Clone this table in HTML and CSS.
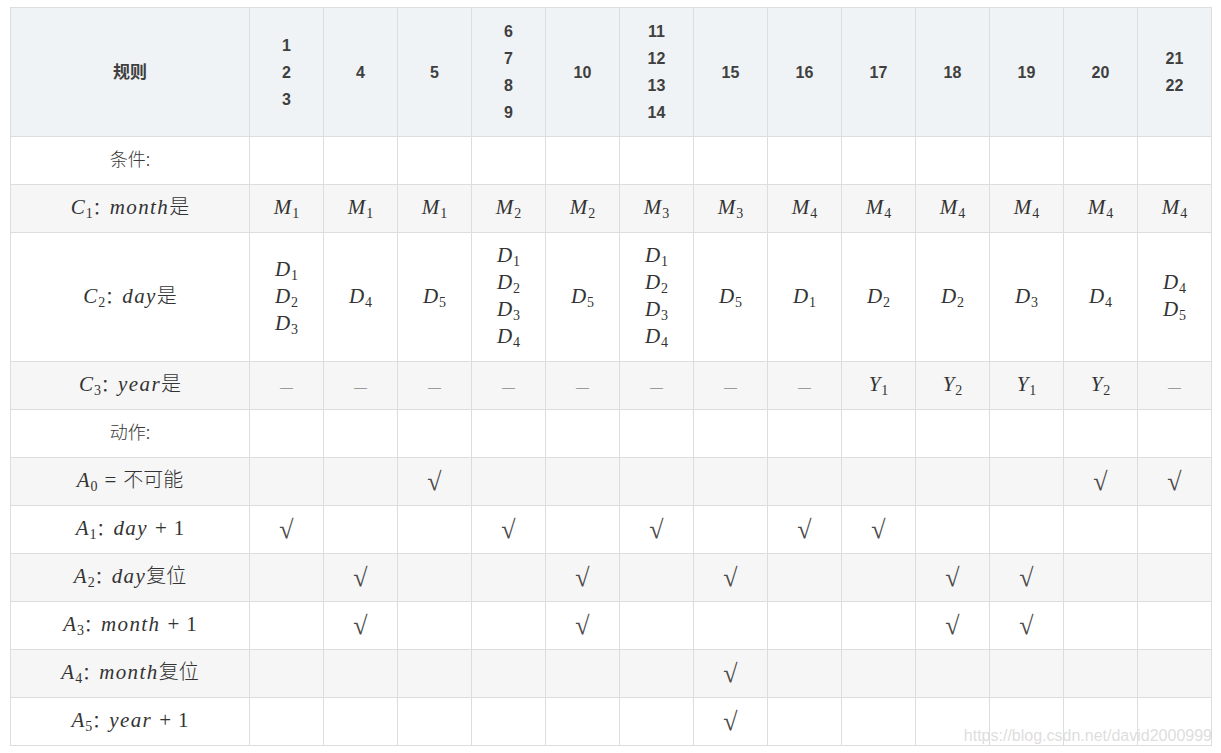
FILE: index.html
```html
<!DOCTYPE html>
<html lang="zh">
<head>
<meta charset="utf-8">
<title>判定表</title>
<link rel="stylesheet" href="styles.css">
</head>
<body>
<div class="page">
<table class="dt">
  <colgroup>
    <col class="c-label">
    <col span="13" class="c-rule">
  </colgroup>
  <thead>
    <tr>
      <th><span class="hz">规则</span></th>
      <th>1<br>2<br>3</th>
      <th>4</th>
      <th>5</th>
      <th>6<br>7<br>8<br>9</th>
      <th>10</th>
      <th>11<br>12<br>13<br>14</th>
      <th>15</th>
      <th>16</th>
      <th>17</th>
      <th>18</th>
      <th>19</th>
      <th>20</th>
      <th>21<br>22</th>
    </tr>
  </thead>
  <tbody>
    <tr>
      <td><span class="lbl">条件:</span></td>
      <td></td><td></td><td></td><td></td><td></td><td></td><td></td><td></td><td></td><td></td><td></td><td></td><td></td>
    </tr>
    <tr>
      <td><span class="m">C<sub>1</sub></span><span class="colon">：</span><span class="m w">month</span><span class="cjk">是</span></td>
      <td><span class="m">M<sub>1</sub></span></td>
      <td><span class="m">M<sub>1</sub></span></td>
      <td><span class="m">M<sub>1</sub></span></td>
      <td><span class="m">M<sub>2</sub></span></td>
      <td><span class="m">M<sub>2</sub></span></td>
      <td><span class="m">M<sub>3</sub></span></td>
      <td><span class="m">M<sub>3</sub></span></td>
      <td><span class="m">M<sub>4</sub></span></td>
      <td><span class="m">M<sub>4</sub></span></td>
      <td><span class="m">M<sub>4</sub></span></td>
      <td><span class="m">M<sub>4</sub></span></td>
      <td><span class="m">M<sub>4</sub></span></td>
      <td><span class="m">M<sub>4</sub></span></td>
    </tr>
    <tr>
      <td><span class="m">C<sub>2</sub></span><span class="colon">：</span><span class="m w">day</span><span class="cjk">是</span></td>
      <td><span class="m">D<sub>1</sub></span><br><span class="m">D<sub>2</sub></span><br><span class="m">D<sub>3</sub></span></td>
      <td><span class="m">D<sub>4</sub></span></td>
      <td><span class="m">D<sub>5</sub></span></td>
      <td><span class="m">D<sub>1</sub></span><br><span class="m">D<sub>2</sub></span><br><span class="m">D<sub>3</sub></span><br><span class="m">D<sub>4</sub></span></td>
      <td><span class="m">D<sub>5</sub></span></td>
      <td><span class="m">D<sub>1</sub></span><br><span class="m">D<sub>2</sub></span><br><span class="m">D<sub>3</sub></span><br><span class="m">D<sub>4</sub></span></td>
      <td><span class="m">D<sub>5</sub></span></td>
      <td><span class="m">D<sub>1</sub></span></td>
      <td><span class="m">D<sub>2</sub></span></td>
      <td><span class="m">D<sub>2</sub></span></td>
      <td><span class="m">D<sub>3</sub></span></td>
      <td><span class="m">D<sub>4</sub></span></td>
      <td><span class="m">D<sub>4</sub></span><br><span class="m">D<sub>5</sub></span></td>
    </tr>
    <tr>
      <td><span class="m">C<sub>3</sub></span><span class="colon">：</span><span class="m w">year</span><span class="cjk">是</span></td>
      <td><span class="dash">—</span></td>
      <td><span class="dash">—</span></td>
      <td><span class="dash">—</span></td>
      <td><span class="dash">—</span></td>
      <td><span class="dash">—</span></td>
      <td><span class="dash">—</span></td>
      <td><span class="dash">—</span></td>
      <td><span class="dash">—</span></td>
      <td><span class="m">Y<sub>1</sub></span></td>
      <td><span class="m">Y<sub>2</sub></span></td>
      <td><span class="m">Y<sub>1</sub></span></td>
      <td><span class="m">Y<sub>2</sub></span></td>
      <td><span class="dash">—</span></td>
    </tr>
    <tr>
      <td><span class="lbl">动作:</span></td>
      <td></td><td></td><td></td><td></td><td></td><td></td><td></td><td></td><td></td><td></td><td></td><td></td><td></td>
    </tr>
    <tr>
      <td><span class="m">A<sub>0</sub></span><span class="op">=</span><span class="cjk">不可能</span></td>
      <td></td><td></td>
      <td><span class="ck">√</span></td>
      <td></td><td></td><td></td><td></td><td></td><td></td><td></td><td></td>
      <td><span class="ck">√</span></td>
      <td><span class="ck">√</span></td>
    </tr>
    <tr>
      <td><span class="m">A<sub>1</sub></span><span class="colon">：</span><span class="m w">day</span><span class="op">+</span><span class="num">1</span></td>
      <td><span class="ck">√</span></td>
      <td></td><td></td>
      <td><span class="ck">√</span></td>
      <td></td>
      <td><span class="ck">√</span></td>
      <td></td>
      <td><span class="ck">√</span></td>
      <td><span class="ck">√</span></td>
      <td></td><td></td><td></td><td></td>
    </tr>
    <tr>
      <td><span class="m">A<sub>2</sub></span><span class="colon">：</span><span class="m w">day</span><span class="cjk">复位</span></td>
      <td></td>
      <td><span class="ck">√</span></td>
      <td></td><td></td>
      <td><span class="ck">√</span></td>
      <td></td>
      <td><span class="ck">√</span></td>
      <td></td><td></td>
      <td><span class="ck">√</span></td>
      <td><span class="ck">√</span></td>
      <td></td><td></td>
    </tr>
    <tr>
      <td><span class="m">A<sub>3</sub></span><span class="colon">：</span><span class="m w">month</span><span class="op">+</span><span class="num">1</span></td>
      <td></td>
      <td><span class="ck">√</span></td>
      <td></td><td></td>
      <td><span class="ck">√</span></td>
      <td></td><td></td><td></td><td></td>
      <td><span class="ck">√</span></td>
      <td><span class="ck">√</span></td>
      <td></td><td></td>
    </tr>
    <tr>
      <td><span class="m">A<sub>4</sub></span><span class="colon">：</span><span class="m w">month</span><span class="cjk">复位</span></td>
      <td></td><td></td><td></td><td></td><td></td><td></td>
      <td><span class="ck">√</span></td>
      <td></td><td></td><td></td><td></td><td></td><td></td>
    </tr>
    <tr>
      <td><span class="m">A<sub>5</sub></span><span class="colon">：</span><span class="m w">year</span><span class="op">+</span><span class="num">1</span></td>
      <td></td><td></td><td></td><td></td><td></td><td></td>
      <td><span class="ck">√</span></td>
      <td></td><td></td><td></td><td></td><td></td><td></td>
    </tr>
  </tbody>
</table>
<div class="watermark">https://blog.csdn.net/david2000999</div>
</div>
</body>
</html>
```
FILE: styles.css
```css
html, body {
  margin: 0;
  padding: 0;
  background: #fff;
}

.page {
  position: relative;
  padding: 7px 0 0 10px;
  width: 1202px;
  font-family: "Liberation Sans", Arial, "Noto Sans CJK SC", sans-serif;
  font-size: 16px;
  color: #4f4f4f;
}

.dt {
  border-collapse: collapse;
  table-layout: fixed;
  width: 1202px;
}

.c-label { width: 239px; }
.c-rule { width: 74px; }

.dt th,
.dt td {
  border: 1px solid #dddddd;
  padding: 10px 0;
  height: 27px;
  line-height: 27px;
  text-align: center;
  vertical-align: middle;
  white-space: nowrap;
}

.dt th {
  background: #eff3f5;
  font-weight: bold;
  color: #3f3f3f;
}

.dt tbody tr:nth-child(even) td {
  background: #f6f6f6;
}

.dt td span,
.dt th span {
  line-height: 16px;
}

.hz {
  font-family: "Noto Sans CJK SC", sans-serif;
  font-size: 17px;
}

.lbl {
  font-family: "Noto Sans CJK SC", sans-serif;
  font-size: 18px;
  font-weight: 300;
  color: #3a3a3a;
}

.m {
  font-family: "Liberation Serif", "Times New Roman", serif;
  font-style: italic;
  font-size: 21px;
  color: #333;
}

.m.w {
  letter-spacing: 1.4px;
}

.m sub {
  font-style: normal;
  font-size: 14px;
  line-height: 0;
  vertical-align: -4px;
  margin-left: 1px;
  letter-spacing: 0;
}

.colon {
  font-family: "Noto Sans CJK SC", sans-serif;
  font-size: 17px;
  color: #333;
}

.cjk {
  font-family: "Noto Sans CJK SC", sans-serif;
  font-size: 20px;
  font-weight: 300;
  color: #333;
}

.op {
  font-family: "Liberation Serif", serif;
  font-size: 21px;
  color: #333;
  margin: 0 7px;
}

.num {
  font-family: "Liberation Serif", serif;
  font-size: 21px;
  color: #333;
}

.dash {
  font-family: "Liberation Serif", serif;
  font-size: 13px;
  color: #555;
}

.ck {
  font-family: "Liberation Serif", serif;
  font-size: 26px;
  color: #4a4a4a;
  vertical-align: -3px;
}

.watermark {
  position: absolute;
  right: 0;
  bottom: 0;
  font-family: "Liberation Sans", Arial, sans-serif;
  font-size: 16px;
  color: rgba(215, 215, 215, 0.85);
  line-height: 20px;
}
```
